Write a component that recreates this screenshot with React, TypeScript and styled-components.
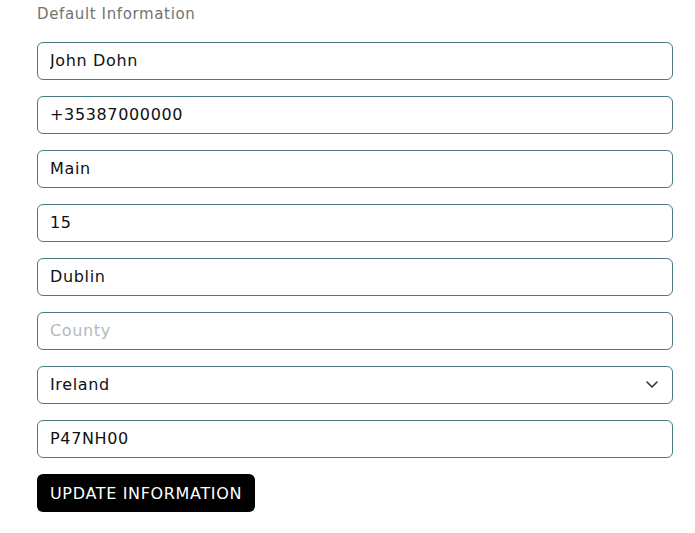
import React from "react";
import styled, { createGlobalStyle } from "styled-components";

const Global = createGlobalStyle`
  body { margin: 0; background: #fff; font-family: "DejaVu Sans", "Open Sans", sans-serif; }
`;

const Form = styled.form`
  width: 636px;
  padding: 4px 0 0 37px;
  display: flex;
  flex-direction: column;
  gap: 16px;
`;

const Title = styled.div`
  font-size: 15px;
  line-height: 20px;
  letter-spacing: 0.63px;
  color: #737373;
  margin-bottom: 2px;
`;

const Field = styled.input`
  box-sizing: border-box;
  width: 100%;
  height: 38px;
  border: 1px solid #4d7a80;
  border-radius: 6px;
  padding: 0 12px 1px;
  font-family: inherit;
  font-size: 16px;
  letter-spacing: 0.65px;
  color: #111;
  background: #fff;
  outline: none;
  &::placeholder { color: #b3b9be; }
`;

const SelectWrap = styled.div`
  position: relative;
`;

const Select = styled.select`
  box-sizing: border-box;
  width: 100%;
  height: 38px;
  border: 1px solid #4d7a80;
  border-radius: 6px;
  padding: 0 12px 1px;
  font-family: inherit;
  font-size: 16px;
  letter-spacing: 0.65px;
  color: #111;
  background: #fff;
  appearance: none;
  outline: none;
`;

const Chevron = styled.svg`
  position: absolute;
  right: 14px;
  top: 13px;
  pointer-events: none;
`;

const Button = styled.button`
  align-self: flex-start;
  height: 38px;
  padding: 0 13px;
  background: #000;
  color: #fff;
  border: none;
  border-radius: 6px;
  font-family: inherit;
  font-size: 16px;
  letter-spacing: 0.66px;
  cursor: pointer;
`;

export default function App() {
  return (
    <>
      <Global />
      <Form onSubmit={(e) => e.preventDefault()}>
        <Title>Default Information</Title>
        <Field defaultValue="John Dohn" />
        <Field defaultValue="+35387000000" />
        <Field defaultValue="Main" />
        <Field defaultValue="15" />
        <Field defaultValue="Dublin" />
        <Field placeholder="County" />
        <SelectWrap>
          <Select defaultValue="Ireland">
            <option>Ireland</option>
          </Select>
          <Chevron width="14" height="10" viewBox="0 0 14 10">
            <path d="M2 3 L7 8 L12 3" fill="none" stroke="#333" strokeWidth="1.6" strokeLinecap="round" strokeLinejoin="round" />
          </Chevron>
        </SelectWrap>
        <Field defaultValue="P47NH00" />
        <Button type="submit">UPDATE INFORMATION</Button>
      </Form>
    </>
  );
}
